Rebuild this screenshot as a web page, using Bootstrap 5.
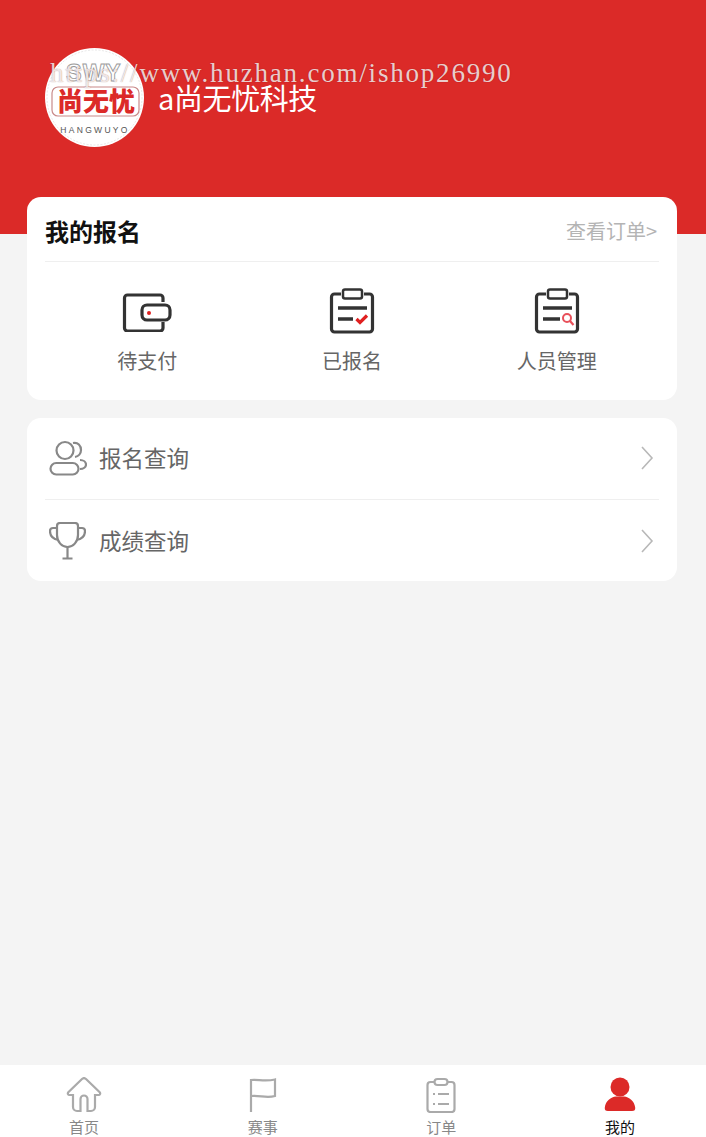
<!DOCTYPE html>
<html lang="zh-CN">
<head>
    <meta charset="UTF-8">
    <title>我的</title>
    <link href="https://cdn.jsdelivr.net/npm/bootstrap@5.3.3/dist/css/bootstrap.min.css" rel="stylesheet">
    <style>
        html, body { height: 100%; }
        body { background-color: #f4f4f4; font-family: "Noto Sans CJK SC", sans-serif; }
        .page-wrap { min-height: 100vh; width: 706px; overflow: hidden; }
        .top-banner { height: 234px; background-color: #db2a28; padding: 48px 45px 0; }
        .watermark { position: absolute; left: 50px; top: 57px; font-family: "Liberation Serif", serif; font-size: 27px; line-height: 32px; letter-spacing: 1.8px; color: rgba(255,255,255,.8); text-shadow: 0 0 1px rgba(90,0,0,.5); white-space: nowrap; }
        .avatar-box { width: 99px; height: 99px; flex: none; }
        .shop-name { font-size: 29px; color: #fff; margin: 35px 0 0 14px; line-height: 1; letter-spacing: -.4px; }
        .panel-box { background: #fff; border-radius: 14px; margin: 0 29px 18px 27px; padding: 0 18px; }
        .panel-first { margin-top: -37px; height: 203px; }
        .panel-head { height: 65px; border-bottom: 1px solid #efefef; padding-top: 3px; }
        .panel-title { font-size: 24px; font-weight: 700; color: #111; }
        .panel-more { font-size: 20px; color: #b4b4b4; margin-right: 2px; }
        .entry-cell { padding-top: 28px; color: #666; font-size: 20px; line-height: 28px; text-align: center; }
        .entry-cell svg { display: block; margin: 0 auto 15px; }
        .entry-cell svg.clip-icon { margin-top: -2px; margin-bottom: 11px; }
        .line-row { height: 81px; color: #666; font-size: 22.500px; padding-bottom: 2px; }
        .line-row + .line-row { border-top: 1px solid #efefef; height: 82px; padding-bottom: 0; }
        .line-row .line-text { margin-left: 13px; }
        .line-row .line-text.text-tight { margin-left: 12px; }
        .line-row svg.line-icon { margin-left: 4px; }
        .line-row svg.line-arrow { margin-left: auto; margin-right: 5px; }
        .tab-strip { height: 72px; background: #fff; padding: 0 56px 0 54px; }
        .tab-entry { width: 60px; text-align: center; font-size: 15px; line-height: 20px; color: #888; padding-top: 12px; }
        .tab-entry svg { display: block; margin: 0 auto 4px; }
        .tab-on { color: #111; }
    </style>
</head>
<body>
<div class="page-wrap d-flex flex-column position-relative">
    <div class="flex-grow-1">
        <div class="top-banner d-flex align-items-start">
            <svg class="avatar-box" viewBox="0 0 99 99">
                <circle cx="49.500" cy="49.500" r="49.500" fill="#fff"/>
                <circle cx="49.500" cy="49.500" r="47.500" fill="none" stroke="#ddd" stroke-width=".7" stroke-dasharray="2 1.500"/>
                <text x="49" y="33" text-anchor="middle" font-family="Liberation Sans" font-weight="700" font-size="23" letter-spacing="1" fill="#fff" stroke="#999" stroke-width=".9">SWY</text>
                <rect x="7" y="39" width="87" height="29" rx="6" fill="#fff" stroke="#c98a8a" stroke-width="1.200"/>
                <text x="51" y="63" text-anchor="middle" font-family="Noto Sans CJK SC" font-weight="900" font-size="26" fill="#dc2a28">尚无忧</text>
                <text x="50" y="84.500" text-anchor="middle" font-family="Liberation Sans" font-size="8.500" letter-spacing="2.300" fill="#555">HANGWUYO</text>
            </svg>
            <div class="shop-name">a尚无忧科技</div>
        </div>
        <div class="watermark">https://www.huzhan.com/ishop26990</div>

        <div class="panel-box panel-first">
            <div class="panel-head d-flex align-items-center justify-content-between">
                <div class="panel-title">我的报名</div>
                <div class="panel-more">查看订单&gt;</div>
            </div>
            <div class="row g-0">
                <div class="col-4 entry-cell">
                    <svg width="50" height="42" viewBox="0 0 50 42" fill="none" stroke="#333" stroke-width="3.200">
                        <path d="M41 12V8a3 3 0 0 0-3-3H5.500a3 3 0 0 0-3 3v30a3 3 0 0 0 3 3H38a3 3 0 0 0 3-3v-6"/>
                        <rect x="20" y="15" width="28" height="15" rx="5" fill="#fff"/>
                        <circle cx="27" cy="23" r="2" fill="#e02020" stroke="none"/>
                    </svg>
                    待支付
                </div>
                <div class="col-4 entry-cell">
                    <svg class="clip-icon" width="50" height="48" viewBox="0 0 50 48" fill="none" stroke="#333" stroke-width="3.200">
                        <path d="M14 6H7.500a3 3 0 0 0-3 3v32a3 3 0 0 0 3 3h35a3 3 0 0 0 3-3V9a3 3 0 0 0-3-3H37"/>
                        <rect x="16" y="1.500" width="19" height="9" rx="2" stroke-width="2.500"/>
                        <path d="M11 20h29M11 31h15" stroke-width="3.500"/>
                        <path d="M29.500 31l3.500 3.500 7-7" stroke="#e02020"/>
                    </svg>
                    已报名
                </div>
                <div class="col-4 entry-cell">
                    <svg class="clip-icon" width="50" height="48" viewBox="0 0 50 48" fill="none" stroke="#333" stroke-width="3.200">
                        <path d="M14 6H7.500a3 3 0 0 0-3 3v32a3 3 0 0 0 3 3h35a3 3 0 0 0 3-3V9a3 3 0 0 0-3-3H37"/>
                        <rect x="16" y="1.500" width="19" height="9" rx="2" stroke-width="2.500"/>
                        <path d="M11 20h29M11 31h17" stroke-width="3.500"/>
                        <circle cx="35" cy="30" r="4" stroke="#e8505a" stroke-width="2"/>
                        <path d="M38 33l3.500 4" stroke="#e8505a" stroke-width="2.200"/>
                    </svg>
                    人员管理
                </div>
            </div>
        </div>

        <div class="panel-box">
            <div class="line-row d-flex align-items-center">
                <svg class="line-icon" width="38" height="36" viewBox="0 0 38 36" fill="none" stroke="#888" stroke-width="2.200">
                    <circle cx="16" cy="10.500" r="8.500"/>
                    <rect x="1.500" y="23" width="28" height="11.500" rx="5.700"/>
                    <path d="M24 3c5-1 8 2.500 8 7 0 3.500-2.500 6.500-6 7M31 20c3.500 0 6 2 6 4.500s-2.500 4.500-6 4.500"/>
                </svg>
                <div class="line-text text-tight">报名查询</div>
                <svg class="line-arrow" width="14" height="24" viewBox="0 0 14 24" fill="none" stroke="#b8b8b8" stroke-width="1.600"><path d="M2 1l10 11L2 23"/></svg>
            </div>
            <div class="line-row d-flex align-items-center">
                <svg class="line-icon" width="37" height="38" viewBox="0 0 37 38" fill="none" stroke="#888" stroke-width="2.200">
                    <path d="M8 4c0-2 1-3 3-3h15c2 0 3 1 3 3v9c0 7-5 12-10.500 12S8 20 8 13z"/>
                    <path d="M8 6H4C2 6 1 7 1 9c0 5 3 8 8.500 9M29 6h4c2 0 3 1 3 3 0 5-3 8-8.500 9"/>
                    <path d="M18.500 25v11.500M13.500 36.500h10"/>
                </svg>
                <div class="line-text">成绩查询</div>
                <svg class="line-arrow" width="14" height="24" viewBox="0 0 14 24" fill="none" stroke="#b8b8b8" stroke-width="1.600"><path d="M2 1l10 11L2 23"/></svg>
            </div>
        </div>
    </div>

    <div class="tab-strip d-flex justify-content-between">
        <div class="tab-entry">
            <svg width="36" height="36" viewBox="0 0 36 36" fill="none" stroke="#aaa" stroke-width="2.200">
                <path d="M7 18v12a4 4 0 0 0 4 4h3.500V22a3.500 3.500 0 0 1 7 0v12H25a4 4 0 0 0 4-4V18h3.500c1.500 0 2.200-1.500 1.200-2.700L20 2a3 3 0 0 0-4 0L2.300 15.300C1.300 16.500 2 18 3.500 18z"/>
            </svg>
            首页
        </div>
        <div class="tab-entry">
            <svg width="36" height="36" viewBox="0 0 36 36" fill="none" stroke="#aaa" stroke-width="2.200">
                <path d="M6 35V3c7-1 13 2 24-.5V19c-9 2.500-15-1-24 0"/>
            </svg>
            赛事
        </div>
        <div class="tab-entry">
            <svg width="36" height="36" viewBox="0 0 36 36" fill="none" stroke="#aaa" stroke-width="2.200">
                <path d="M11 5H7.500a3 3 0 0 0-3 3v24a3 3 0 0 0 3 3h21a3 3 0 0 0 3-3V8a3 3 0 0 0-3-3H25"/>
                <rect x="11.500" y="2" width="13" height="6" rx="3"/>
                <path d="M10 17h2M15 17h11M10 27h2M15 27h11"/>
            </svg>
            订单
        </div>
        <div class="tab-entry tab-on">
            <svg width="36" height="36" viewBox="0 0 36 36" fill="#dc2a28">
                <circle cx="18" cy="10" r="9.500"/>
                <path d="M6 34c-2.500 0-3.500-1-3.200-3.500C3.500 24 9 20 14 19.500h8c5 .5 10.500 4.500 11.200 11 .3 2.500-.7 3.500-3.200 3.500z"/>
            </svg>
            我的
        </div>
    </div>
</div>
<script src="https://cdn.jsdelivr.net/npm/bootstrap@5.3.3/dist/js/bootstrap.bundle.min.js"></script>
</body>
</html>
